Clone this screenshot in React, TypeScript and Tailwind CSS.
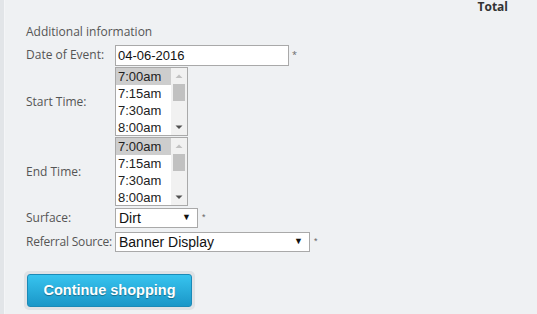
import React from "react";

const times = ["7:00am", "7:15am", "7:30am", "8:00am"];

function TimeList() {
  return (
    <div className="flex h-[69px] w-[73px] border border-[#a9a9a9] bg-white">
      <div className="flex-1 flex flex-col">
        {times.map((t, i) => (
          <div
            key={t}
            className={`h-[17px] leading-[17px] pl-[2px] text-[13px] text-[#222] ${i === 0 ? "bg-[#cdcdcd]" : ""}`}
          >
            {t}
          </div>
        ))}
      </div>
      <div className="w-[16px] flex flex-col items-center bg-[#f1f1f1]">
        <svg width="16" height="16" viewBox="0 0 16 16">
          <path d="M4.5 10 L8 6.5 L11.5 10 Z" fill="#c1c1c1" />
        </svg>
        <div className="w-[12px] h-[17px] bg-[#c1c1c1]" />
        <div className="flex-1" />
        <svg width="16" height="16" viewBox="0 0 16 16">
          <path d="M4.5 6.5 L8 10 L11.5 6.5 Z" fill="#505050" />
        </svg>
      </div>
    </div>
  );
}

function Select({ value, width }: { value: string; width: string }) {
  return (
    <div className={`flex items-center h-[20px] ${width} border border-[#a9a9a9] bg-white pl-[3px] pr-[6px] text-[14px] text-[#111]`}>
      <span className="flex-1">{value}</span>
      <span className="text-[9px] text-[#111]">▼</span>
    </div>
  );
}

export default function App() {
  return (
    <div className="w-[537px] h-[314px] bg-[#eff1f3] flex overflow-hidden font-['Open_Sans',sans-serif]">
      <div className="w-[5px] bg-[#e2e5e8] border-r border-[#f4f5f7]" />
      <div className="flex-1 relative">
        <div className="absolute right-[29px] top-0 text-[12px] leading-[13px] font-bold text-[#333]">Total</div>
        <div className="pl-[21px] pt-[23px] text-[12px] text-[#555]">
          <div className="h-[17px] leading-[17px]">Additional information</div>
          <div className="flex items-center mt-[5px] h-[20px]">
            <div className="w-[89px] whitespace-nowrap">Date of Event:</div>
            <div className="h-[21px] w-[174px] border border-[#a9a9a9] bg-white pl-[2px] leading-[19px] text-[13px] text-[#111] font-['Liberation_Sans',sans-serif]">
              04-06-2016
            </div>
            <span className="ml-[3px] text-[9px] text-[#666]">*</span>
          </div>
          <div className="flex items-center mt-[2px] font-['Liberation_Sans',sans-serif]">
            <div className="w-[89px] whitespace-nowrap font-['Open_Sans',sans-serif]">Start Time:</div>
            <TimeList />
          </div>
          <div className="flex items-center mt-[1px] font-['Liberation_Sans',sans-serif]">
            <div className="w-[89px] whitespace-nowrap font-['Open_Sans',sans-serif]">End Time:</div>
            <TimeList />
          </div>
          <div className="flex items-center mt-[2px] font-['Liberation_Sans',sans-serif]">
            <div className="w-[89px] whitespace-nowrap font-['Open_Sans',sans-serif]">Surface:</div>
            <Select value="Dirt" width="w-[83px]" />
            <span className="ml-[4px] text-[9px] text-[#666]">*</span>
          </div>
          <div className="flex items-center mt-[4px] font-['Liberation_Sans',sans-serif]">
            <div className="w-[89px] whitespace-nowrap tracking-[-0.2px] font-['Open_Sans',sans-serif]">Referral Source:</div>
            <Select value="Banner Display" width="w-[195px]" />
            <span className="ml-[4px] text-[9px] text-[#666]">*</span>
          </div>
          <div className="mt-[19px] ml-[-2px] inline-block rounded-[5px] bg-[#dfe2e5] p-[3px]">
            <button className="w-[165px] h-[33px] rounded-[3px] border border-[#1b8ab7] bg-gradient-to-b from-[#37c4ef] to-[#1a97c8] text-[14.5px] font-bold text-white font-['Liberation_Sans',sans-serif] [text-shadow:0_1px_1px_rgba(0,0,0,0.35)]">
              Continue shopping
            </button>
          </div>
        </div>
      </div>
    </div>
  );
}
